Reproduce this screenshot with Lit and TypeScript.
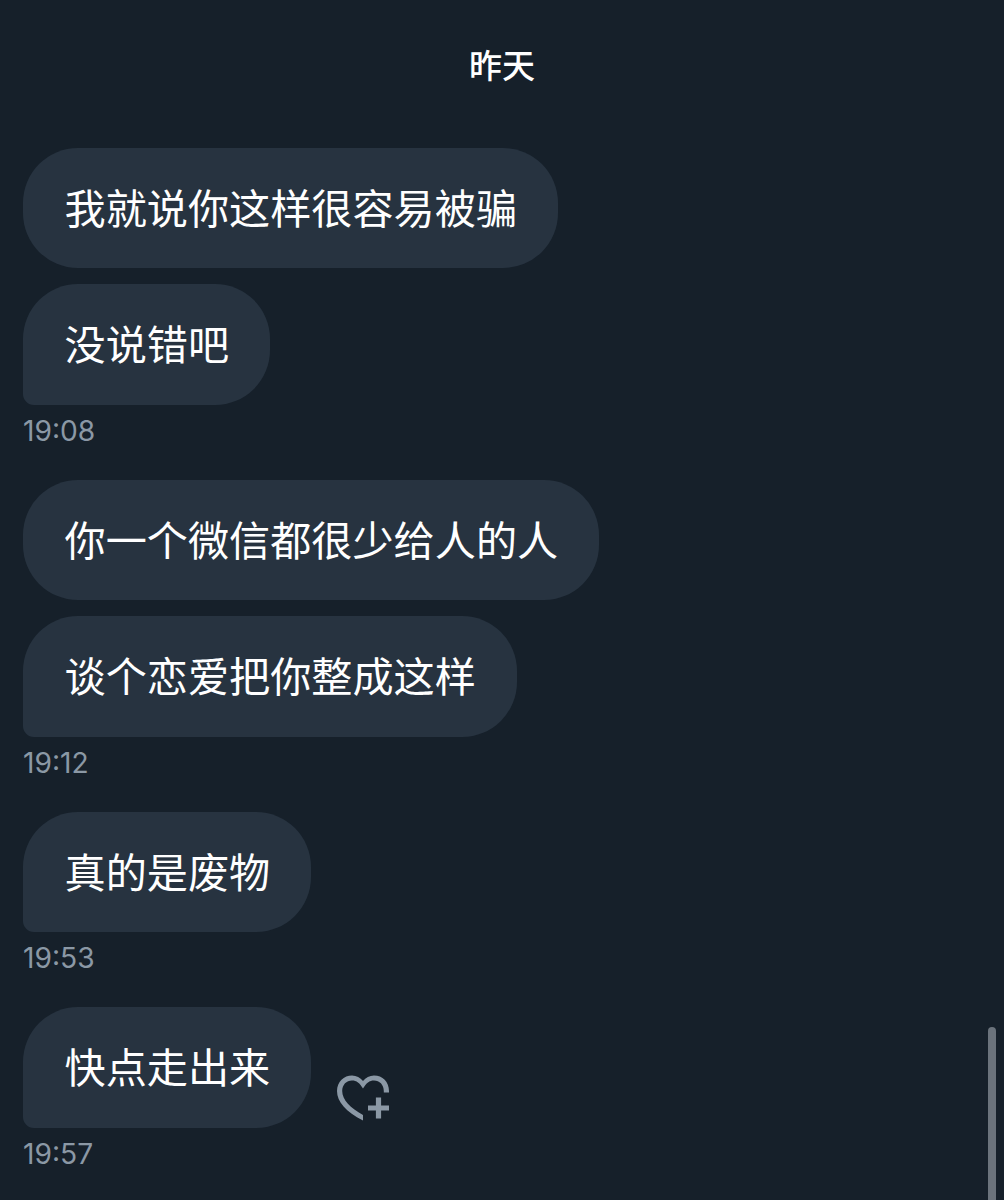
import { LitElement, html, css, svg, nothing } from "lit";
import { customElement } from "lit/decorators.js";
import { classMap } from "lit/directives/class-map.js";

interface Group {
  time: string;
  messages: string[];
  react?: boolean;
}

const groups: Group[] = [
  { time: "19:08", messages: ["我就说你这样很容易被骗", "没说错吧"] },
  { time: "19:12", messages: ["你一个微信都很少给人的人", "谈个恋爱把你整成这样"] },
  { time: "19:53", messages: ["真的是废物"] },
  { time: "19:57", messages: ["快点走出来"], react: true },
];

const heartPlus = svg`
  <path fill="currentColor" d="M26 45.600C9 36.500 0 27 0 16C0 6.500 7 0.400 15 0.400C19.500 0.400 23.200 2.500 26 6C28.800 2.500 32.500 0.400 37 0.400C45.500 0.400 52 6.500 52 16V17.500H46.800V16C46.800 9.500 42.500 5.400 37 5.400C32.500 5.400 29.200 8 26 13.500C22.800 8 19.500 5.400 15 5.400C9.500 5.400 5.200 9.500 5.200 16C5.200 25 13.500 33 26 40Z"/>
  <path fill="none" stroke="currentColor" stroke-width="5.200" d="M41.500 22.500V43.500M31 33H52"/>`;

@customElement("app-root")
export class AppRoot extends LitElement {
  static styles = css`
    :host {
      display: block;
    }
    .page {
      position: relative;
      box-sizing: border-box;
      height: 1200px;
      overflow: hidden;
      background: #16202a;
      color: #fff;
      font-family: Inter, "Noto Sans CJK SC", sans-serif;
      padding: 36px 23px 0;
    }
    .day {
      margin: 0 0 51.5px;
      height: 60px;
      line-height: 60px;
      font-size: 33px;
      font-weight: 500;
      text-align: center;
    }
    .group {
      display: flex;
      flex-direction: column;
      gap: 16px;
      margin-bottom: 32px;
    }
    .row {
      display: flex;
      align-items: flex-end;
      gap: 26px;
    }
    .bubble {
      box-sizing: border-box;
      height: 120.5px;
      padding: 0 41px 0 41.5px;
      border-radius: 55px;
      background: #273340;
      font-size: 41.15px;
      font-weight: 400;
      line-height: 122px;
      white-space: nowrap;
    }
    .last {
      border-bottom-left-radius: 11px;
    }
    .time {
      height: 35px;
      margin-top: -8px;
      font-size: 28.2px;
      line-height: 36px;
      color: #8b98a5;
    }
    .react {
      width: 53px;
      height: 46px;
      margin-bottom: 7px;
      color: #8b98a5;
    }
    .scrollbar {
      position: absolute;
      right: 8px;
      top: 1026.5px;
      width: 8px;
      height: 190px;
      border-radius: 4px;
      background: #6b737c;
    }
  `;

  render() {
    return html`<main class="page">
      <h1 class="day">昨天</h1>
      ${groups.map(
        (g) => html`<section class="group">
          ${g.messages.map(
            (m, i) => html`<div class="row">
              <div class=${classMap({ bubble: true, last: i === g.messages.length - 1 })}>${m}</div>
              ${g.react ? html`<svg class="react" viewBox="0 0 53 46">${heartPlus}</svg>` : nothing}
            </div>`
          )}
          <div class="time">${g.time}</div>
        </section>`
      )}
      <div class="scrollbar"></div>
    </main>`;
  }
}
